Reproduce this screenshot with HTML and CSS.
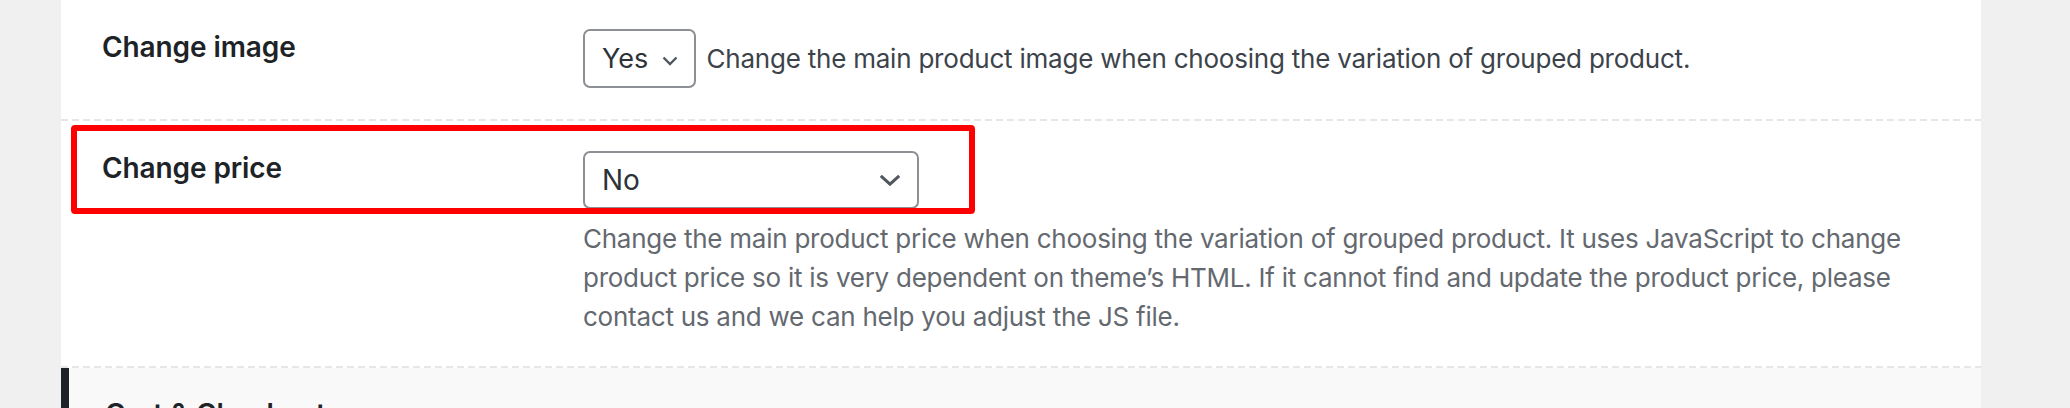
FILE: index.html
```html
<!DOCTYPE html>
<html lang="en">
<head>
    <meta charset="UTF-8">
    <meta name="viewport" content="width=device-width, initial-scale=1.0">
    <title>Grouped product settings</title>
    <link rel="stylesheet" href="styles.css">
</head>
<body>
    <div class="wrap">
        <div class="panel">
            <!-- Change image -->
            <div class="row">
                <div class="label">Change image</div>
                <div class="field">
                    <div class="select select-small">
                        <span>Yes</span>
                        <svg class="chevron" width="16" height="10" viewBox="0 0 16 10"><path d="M1.5 1.5 L8 8 L14.5 1.5" fill="none" stroke="#50575e" stroke-width="2.4"/></svg>
                    </div>
                    <span class="inline-desc">Change the main product image when choosing the variation of grouped product.</span>
                </div>
            </div>

            <!-- Change price -->
            <div class="row row-price">
                <div class="label">Change price</div>
                <div class="field">
                    <div class="select select-wide">
                        <span>No</span>
                        <svg class="chevron" width="22" height="12" viewBox="0 0 22 12"><path d="M1.8 1.8 L11 10.2 L20.2 1.8" fill="none" stroke="#50575e" stroke-width="3"/></svg>
                    </div>
                    <p class="description">Change the main product price when choosing the variation of grouped product. It uses JavaScript to change product price so it is very dependent on theme’s HTML. If it cannot find and update the product price, please contact us and we can help you adjust the JS file.</p>
                </div>
                <div class="highlight"></div>
            </div>

            <!-- next section -->
            <div class="section-head">Cart &amp; Checkout</div>
        </div>
    </div>
</body>
</html>
```

FILE: styles.css
```css
/* Page background like wp-admin */
body {
    margin: 0;
    background-color: #f0f0f1;
    font-family: Inter, "Noto Sans", sans-serif;
    color: #3c434a;
}

.wrap {
    padding: 0 89px 0 61px;
}

.panel {
    background-color: #ffffff;
}

/* One settings row: label column + field column */
.row {
    display: grid;
    grid-template-columns: 481px 1fr;
    padding: 0 20px 0 41px;
    height: 121px;
    box-sizing: border-box;
    background-image: repeating-linear-gradient(90deg, #e6e6e6 0 7px, transparent 7px 11px);
    background-size: 100% 2px;
    background-position: left bottom;
    background-repeat: no-repeat;
}

.row-price {
    position: relative;
    height: 247px;
}

.label {
    padding-top: 29px;
    font-size: 28px;
    line-height: 36px;
    font-weight: 600;
    color: #1d2327;
    letter-spacing: -0.1px;
}

.field {
    padding-top: 29px;
}

.row-price .field {
    padding-top: 30px;
}

/* Fake select boxes */
.select {
    display: inline-flex;
    align-items: center;
    justify-content: space-between;
    box-sizing: border-box;
    height: 59px;
    padding: 0 16px 0 17px;
    border: 2px solid #8c8f94;
    border-radius: 7px;
    color: #2c3338;
    vertical-align: middle;
}

.select-small {
    width: 113px;
    font-size: 27px;
}

.select-wide {
    width: 336px;
    height: 58px;
    font-size: 28px;
}

.select-small .chevron {
    margin-top: 4px;
}

.inline-desc {
    margin-left: 6px;
    font-size: 26px;
    letter-spacing: -0.22px;
    vertical-align: middle;
}

.description {
    margin: 10px 0 0;
    font-size: 26px;
    line-height: 39px;
    letter-spacing: -0.25px;
    color: #646970;
}

/* Red annotation box around the price row */
.highlight {
    position: absolute;
    top: 4px;
    left: 10px;
    width: 904px;
    height: 89px;
    box-sizing: border-box;
    border: 6px solid #ff0000;
    border-radius: 4px;
}

/* Collapsed section header below, cut by the frame */
.section-head {
    height: 40px;
    box-sizing: border-box;
    overflow: hidden;
    padding: 28px 0 0 36px;
    background-color: #f9f9f9;
    border-left: 8px solid #1d2327;
    font-size: 28px;
    line-height: 36px;
    font-weight: 600;
    color: #1d2327;
}
```
